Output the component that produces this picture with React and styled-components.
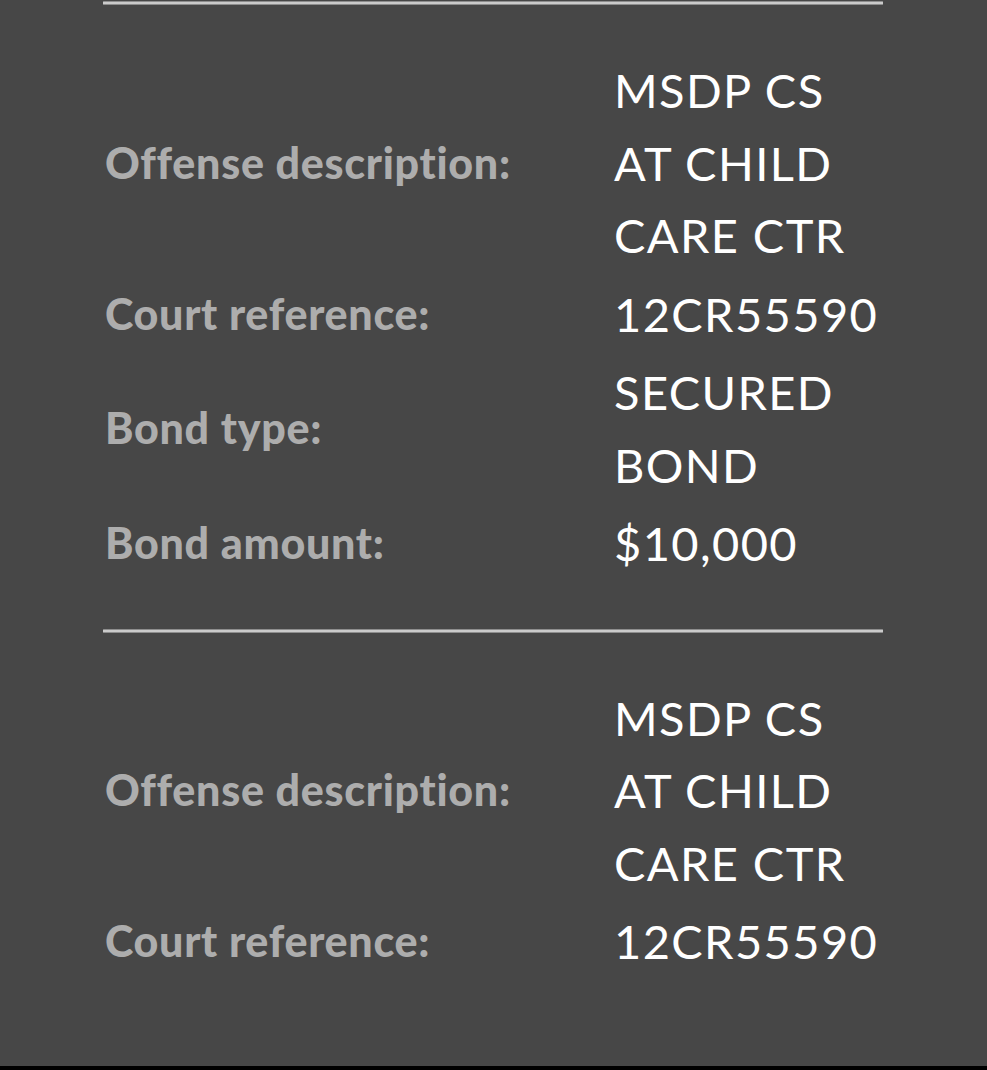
import React from "react";
import styled, { createGlobalStyle } from "styled-components";

const GlobalStyle = createGlobalStyle`
  html, body {
    margin: 0;
    padding: 0;
    background: #000000;
  }
  body {
    font-family: Lato, "Open Sans", "Liberation Sans", sans-serif;
    font-variant-ligatures: none;
  }
`;

const Page = styled.div`
  background: #474747;
  height: 1066px;
  overflow: hidden;
  padding: 0 104px 0 103px;
  box-sizing: border-box;
`;

const Divider = styled.div`
  height: 2px;
  margin-top: ${(p) => (p.$first ? "1px" : "0")};
  background: #cbcbcb;
  border: 1px solid #8e8e8e;
  border-left: none;
  border-right: none;
  border-radius: 1px;
`;

const Section = styled.section`
  display: flex;
  flex-direction: column;
  gap: 6px;
  padding: 49px 0;
`;

const Row = styled.div`
  display: grid;
  grid-template-columns: 511px 1fr;
  align-items: center;
`;

const Label = styled.div`
  font-family: Lato, "Liberation Sans", sans-serif;
  font-weight: 900;
  font-size: 43px;
  line-height: 72.5px;
  letter-spacing: 0.7px;
  font-variant-ligatures: none;
  color: #adadad;
  white-space: nowrap;
  padding-left: 2px;
`;

const Value = styled.div`
  font-family: Lato, "Liberation Sans", sans-serif;
  font-weight: 400;
  font-size: 47px;
  line-height: 72.5px;
  letter-spacing: 1.4px;
  font-variant-ligatures: none;
  color: #ffffff;
`;

const sections = [
  [
    ["Offense description:", "MSDP CS AT CHILD CARE CTR"],
    ["Court reference:", "12CR55590"],
    ["Bond type:", "SECURED BOND"],
    ["Bond amount:", "$10,000"],
  ],
  [
    ["Offense description:", "MSDP CS AT CHILD CARE CTR"],
    ["Court reference:", "12CR55590"],
  ],
];

export default function App() {
  return (
    <>
      <GlobalStyle />
      <Page>
        {sections.map((rows, i) => (
          <React.Fragment key={i}>
            <Divider $first={i === 0} />
            <Section>
              {rows.map(([label, value]) => (
                <Row key={label}>
                  <Label>{label}</Label>
                  <Value>{value}</Value>
                </Row>
              ))}
            </Section>
          </React.Fragment>
        ))}
      </Page>
    </>
  );
}
